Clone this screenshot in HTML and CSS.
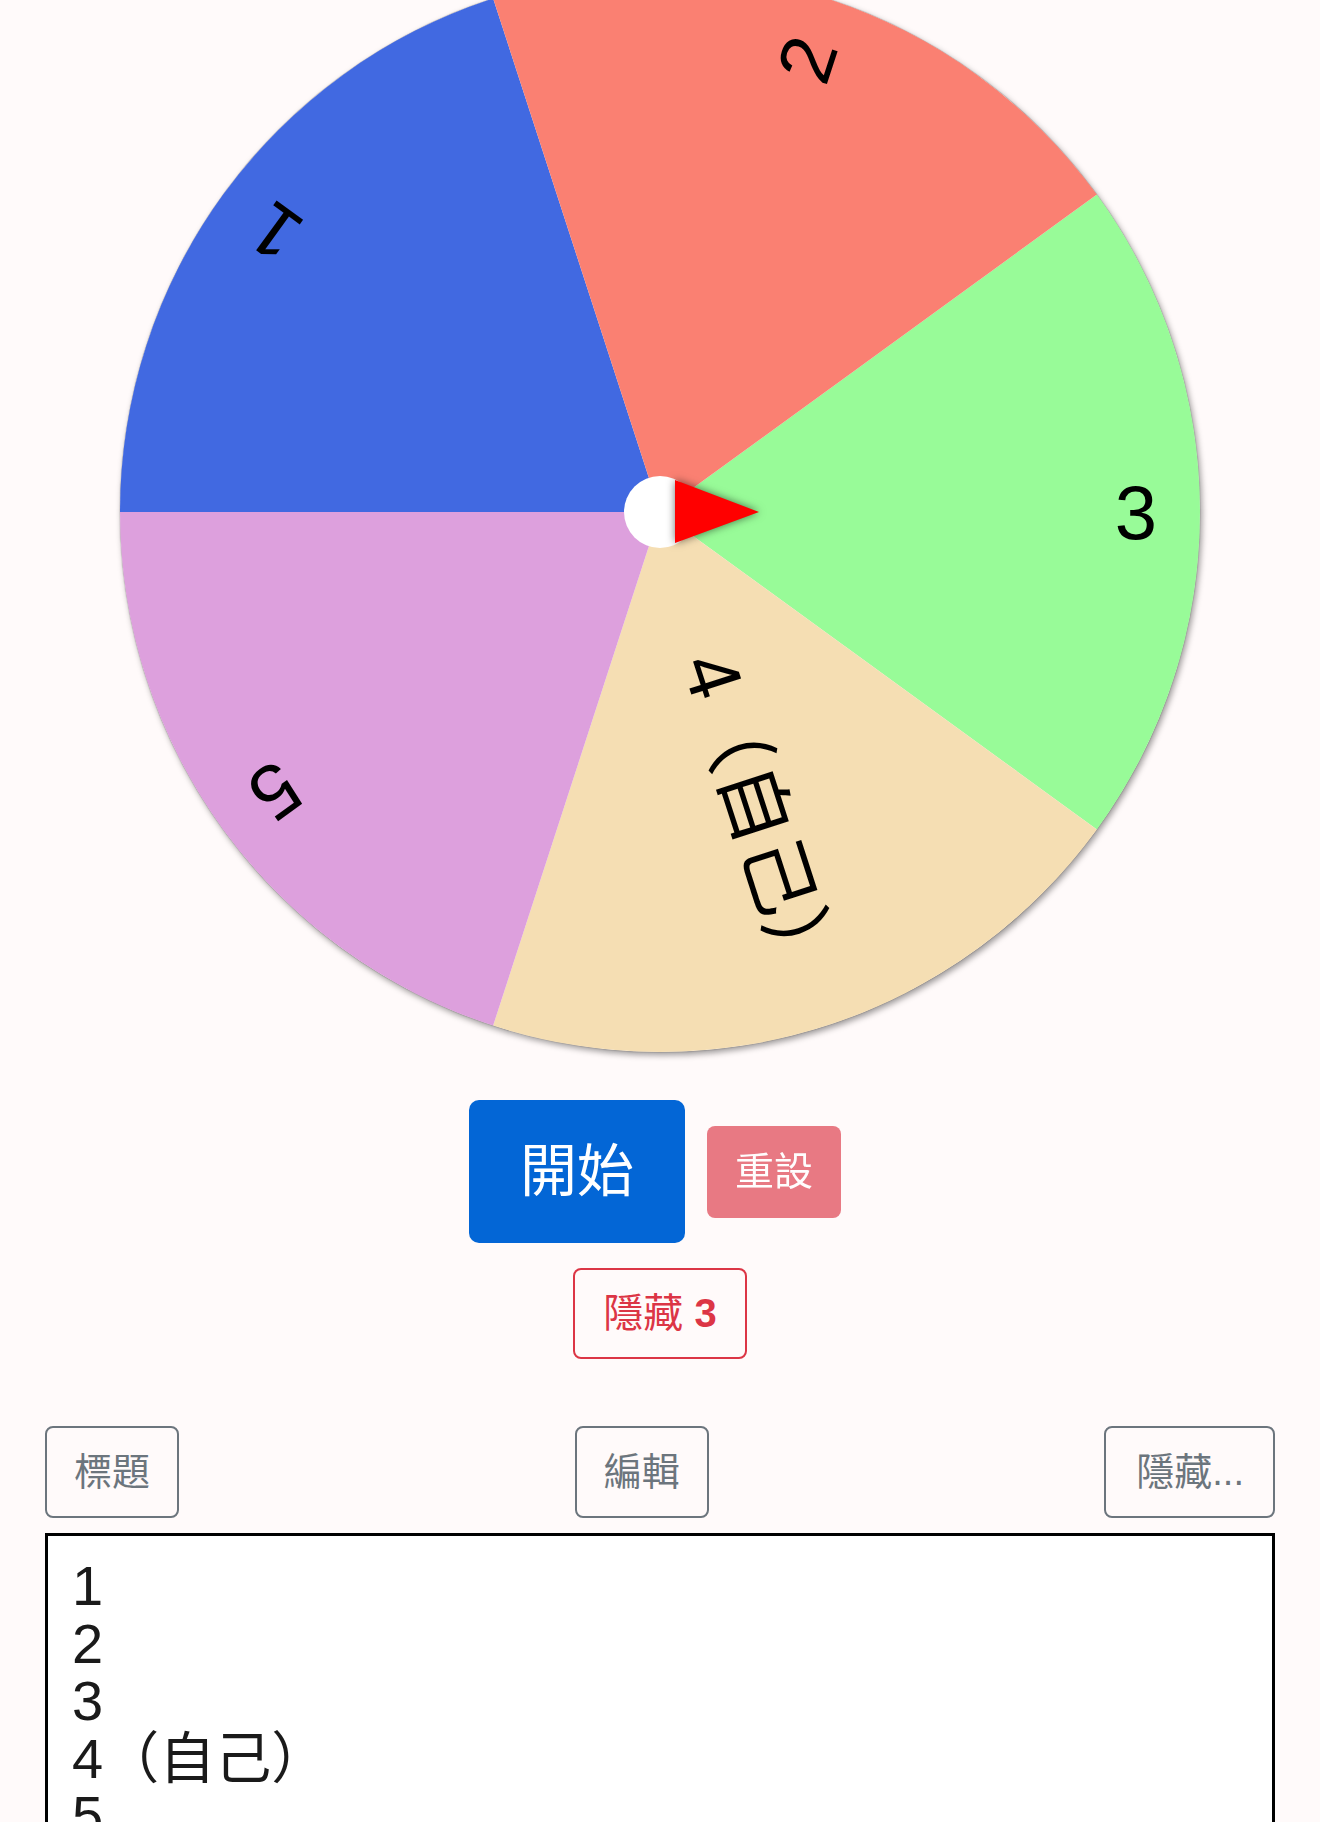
FILE: index.html
```html
<!DOCTYPE html>
<html lang="zh-Hant">
<head>
<meta charset="utf-8">
<title>輪盤</title>
<link rel="stylesheet" href="styles.css">
</head>
<body>
<main class="page">
  <section class="wheel-area">
    <div class="wheel">
      <svg class="wheel-svg" viewBox="-540 -540 1080 1080" width="1080" height="1080">
        <path class="slice" fill="#98fb98" d="M0 0 L436.87 -317.40 A540 540 0 0 1 436.87 317.40 Z"/>
        <path class="slice" fill="#f5deb3" d="M0 0 L436.87 317.40 A540 540 0 0 1 -166.87 513.57 Z"/>
        <path class="slice" fill="#dda0dd" d="M0 0 L-166.87 513.57 A540 540 0 0 1 -540 0 Z"/>
        <path class="slice" fill="#4169e1" d="M0 0 L-540 0 A540 540 0 0 1 -166.87 -513.57 Z"/>
        <path class="slice" fill="#fa8072" d="M0 0 L-166.87 -513.57 A540 540 0 0 1 436.87 -317.40 Z"/>
        <g class="labels">
          <text class="label" transform="rotate(0)" x="497" y="0">3</text>
          <text class="label" transform="rotate(72)" x="497" y="0">4（自己）</text>
          <text class="label" transform="rotate(144)" x="497" y="0">5</text>
          <text class="label" transform="rotate(216)" x="497" y="0">1</text>
          <text class="label" transform="rotate(288)" x="497" y="0">2</text>
        </g>
        <circle class="hub" cx="0" cy="0" r="36"/>
        <polygon class="pointer" points="15,-32 99,0 15,31"/>
      </svg>
    </div>
  </section>

  <section class="actions">
    <button class="btn btn-start" type="button">開始</button>
    <button class="btn btn-reset" type="button" disabled>重設</button>
  </section>

  <section class="hide-row">
    <button class="btn btn-hide" type="button">隱藏 <b>3</b></button>
  </section>

  <section class="toolbar">
    <button class="btn btn-tool" type="button">標題</button>
    <button class="btn btn-tool" type="button">編輯</button>
    <button class="btn btn-tool btn-tool-wide" type="button">隱藏...</button>
  </section>

  <section class="editor">
    <textarea class="entries" spellcheck="false">1
2
3
4（自己）
5</textarea>
  </section>
</main>
</body>
</html>
```

FILE: styles.css
```css
html {
  overflow: hidden;
}

body {
  margin: 0;
  background: #fffafa;
  font-family: "Liberation Sans", "Noto Sans CJK TC", sans-serif;
}

.wheel-area {
  display: flex;
  justify-content: center;
  margin-top: -28px;
}

.wheel {
  width: 1080px;
  height: 1080px;
  border-radius: 50%;
  box-shadow: 0 0 1px rgba(0, 0, 0, 0.7), 2px 3px 6px rgba(0, 0, 0, 0.4);
}

.wheel-svg {
  display: block;
  overflow: visible;
}

.label {
  font-family: "Liberation Sans", "Noto Sans CJK TC", sans-serif;
  font-size: 76px;
  text-anchor: end;
  dominant-baseline: central;
  fill: #000;
}

.hub {
  fill: #fff;
}

.pointer {
  fill: #ff0000;
  filter: drop-shadow(0 0 4px rgba(0, 0, 0, 0.55));
}

.btn {
  font-family: "Liberation Sans", "Noto Sans CJK TC", sans-serif;
  border: none;
  margin: 0;
  cursor: pointer;
}

.actions {
  display: flex;
  justify-content: center;
  align-items: center;
  gap: 22px;
  margin-top: 48px;
  padding-right: 10px;
}

.btn-start {
  background: #0366d6;
  color: #fff;
  font-size: 57px;
  line-height: 83px;
  padding: 30px 51px;
  border-radius: 10px;
}

.btn-reset {
  background: #dc3545;
  opacity: 0.65;
  color: #fff;
  font-size: 39px;
  line-height: 56px;
  padding: 18px 28px;
  border-radius: 8px;
}

.hide-row {
  display: flex;
  justify-content: center;
  margin-top: 25px;
}

.btn-hide {
  background: transparent;
  border: 2px solid #dc3545;
  color: #dc3545;
  font-size: 40px;
  line-height: 55px;
  padding: 16px 28px;
  border-radius: 8px;
}

.btn-hide b {
  font-weight: 700;
}

.toolbar {
  display: flex;
  justify-content: space-between;
  margin: 67px 45px 0;
}

.btn-tool {
  background: transparent;
  border: 2px solid #6c757d;
  color: #6c757d;
  font-size: 38px;
  line-height: 56px;
  padding: 16px 27px;
  border-radius: 8px;
}

.btn-tool-wide {
  padding: 16px 29px 16px 30px;
}

.editor {
  margin: 15px 45px 0;
}

.entries {
  display: block;
  width: 100%;
  box-sizing: border-box;
  height: 420px;
  border: 3px solid #000;
  border-radius: 0;
  padding: 21px 24px;
  font-family: "Liberation Sans", "Noto Sans CJK TC", sans-serif;
  font-size: 56px;
  line-height: 57.5px;
  color: #1a1a1a;
  background: #fff;
  resize: none;
  outline: none;
}
```
